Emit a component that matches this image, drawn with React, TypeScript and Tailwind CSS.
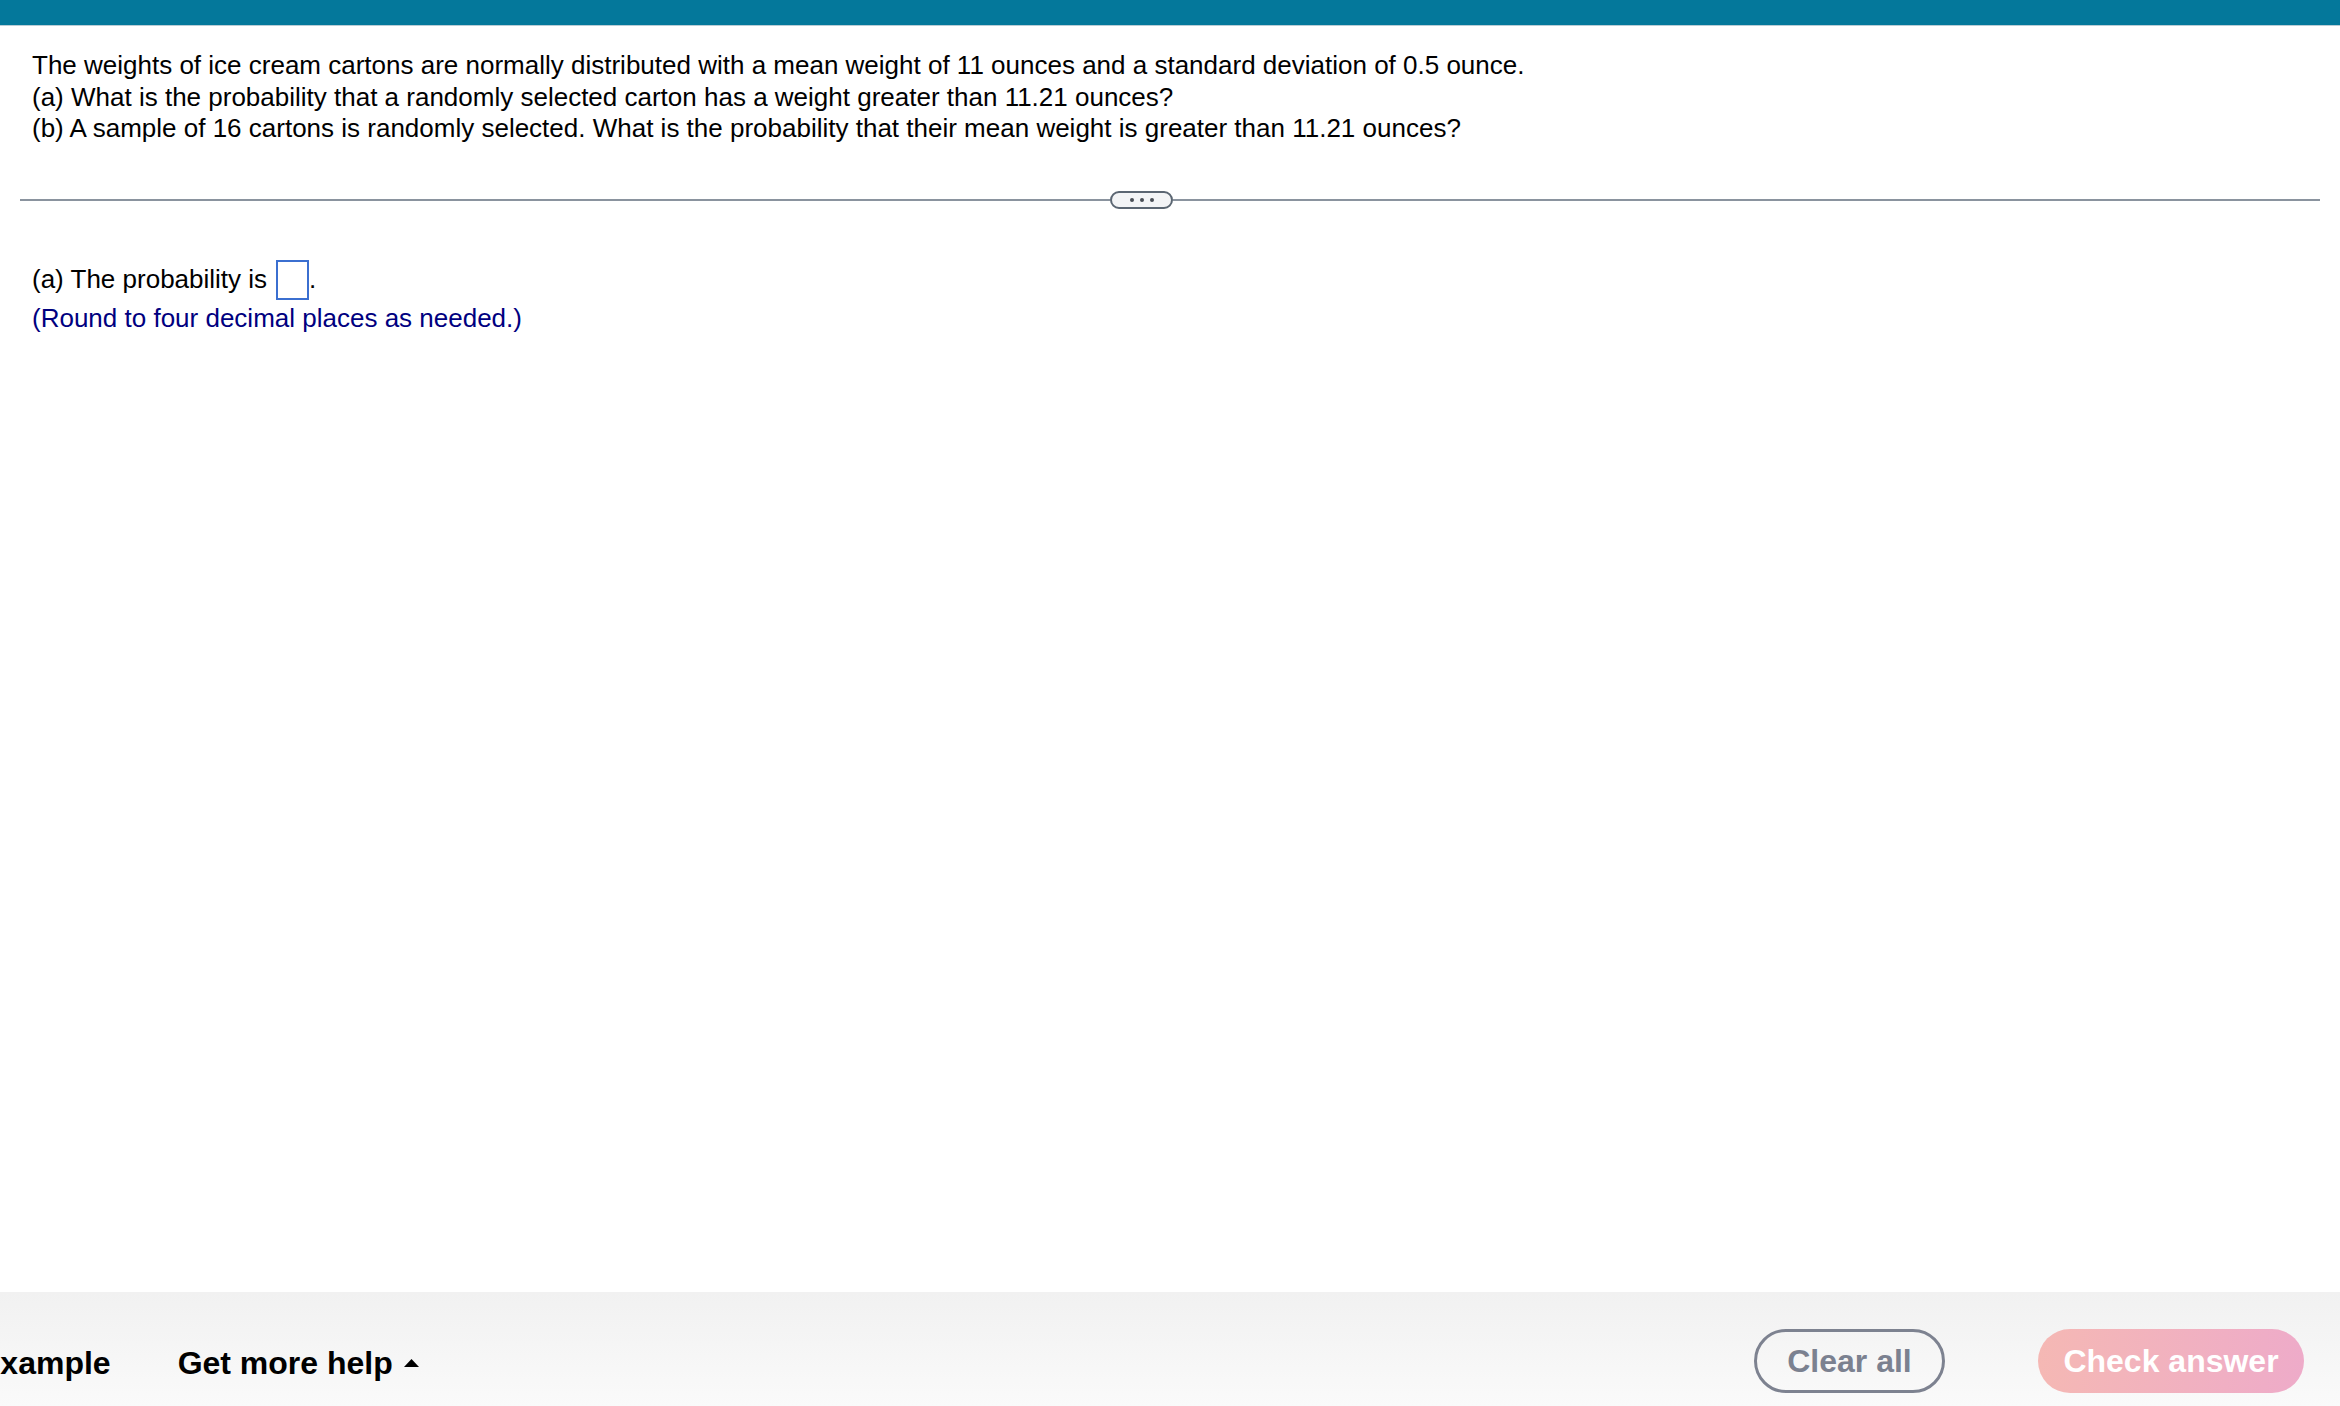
import React from "react";

const FONT = { fontFamily: '"Liberation Sans", Arial, sans-serif' };

const QUESTION = [
  "The weights of ice cream cartons are normally distributed with a mean weight of 11 ounces and a standard deviation of 0.5 ounce.",
  "(a) What is the probability that a randomly selected carton has a weight greater than 11.21 ounces?",
  "(b) A sample of 16 cartons is randomly selected. What is the probability that their mean weight is greater than 11.21 ounces?",
];

export default function App() {
  return (
    <div style={FONT} className="w-[2340px] h-[1406px] flex flex-col bg-white text-black overflow-hidden">
      {/* Top bar */}
      <div className="h-[26px] shrink-0 bg-[#04789b] border-b border-[#b9cdd6]" />

      {/* Question */}
      <div className="px-[32px] pt-[24px] text-[26px] leading-[31.5px]">
        {QUESTION.map((line) => (
          <div key={line}>{line}</div>
        ))}
      </div>

      {/* Divider with ellipsis */}
      <div className="mx-[20px] mt-[46px] flex items-center">
        <div className="h-[2px] w-[1090px] bg-[#8a939e]" />
        <div className="h-[18px] w-[63px] shrink-0 rounded-full border-2 border-[#5b6672] bg-[#f3f4f6] flex items-center justify-center gap-[6px]">
          <span className="w-[4px] h-[4px] rounded-full bg-[#4a4f57]" />
          <span className="w-[4px] h-[4px] rounded-full bg-[#4a4f57]" />
          <span className="w-[4px] h-[4px] rounded-full bg-[#4a4f57]" />
        </div>
        <div className="h-[2px] flex-1 bg-[#8a939e]" />
      </div>

      {/* Answer */}
      <div className="px-[32px] pt-[51px] text-[26px] leading-[31.5px]">
        <div className="flex items-center">
          <span>(a) The probability is</span>
          <span className="ml-[9px] w-[33px] h-[40px] border-2 border-[#3b6fd0] bg-white" />
          <span>.</span>
        </div>
        <div className="mt-[3px] text-[#00007f]">(Round to four decimal places as needed.)</div>
      </div>

      <div className="flex-1" />

      {/* Footer */}
      <div className="h-[114px] shrink-0 bg-gradient-to-b from-[#f1f1f1] to-[#fafafa] flex items-start pt-[37px]">
        <span className="ml-[-21px] h-[64px] pt-[3px] flex items-center text-[32px] font-bold">Example</span>
        <button className="ml-[67px] h-[64px] pt-[3px] flex items-center text-[32px] font-bold text-black">
          Get more help
          <svg width="15" height="8" viewBox="0 0 15 8" className="ml-[11px]">
            <path d="M7.5 0L15 8H0z" fill="#000" />
          </svg>
        </button>
        <div className="flex-1" />
        <button className="w-[191px] h-[64px] rounded-full border-[3px] border-[#7d8290] text-[32px] font-bold text-[#7b8190]">
          Clear all
        </button>
        <button className="ml-[93px] mr-[36px] w-[266px] h-[64px] rounded-full bg-gradient-to-r from-[#f5b8b4] to-[#eeabc9] text-[32px] font-bold text-white">
          Check answer
        </button>
      </div>
    </div>
  );
}
